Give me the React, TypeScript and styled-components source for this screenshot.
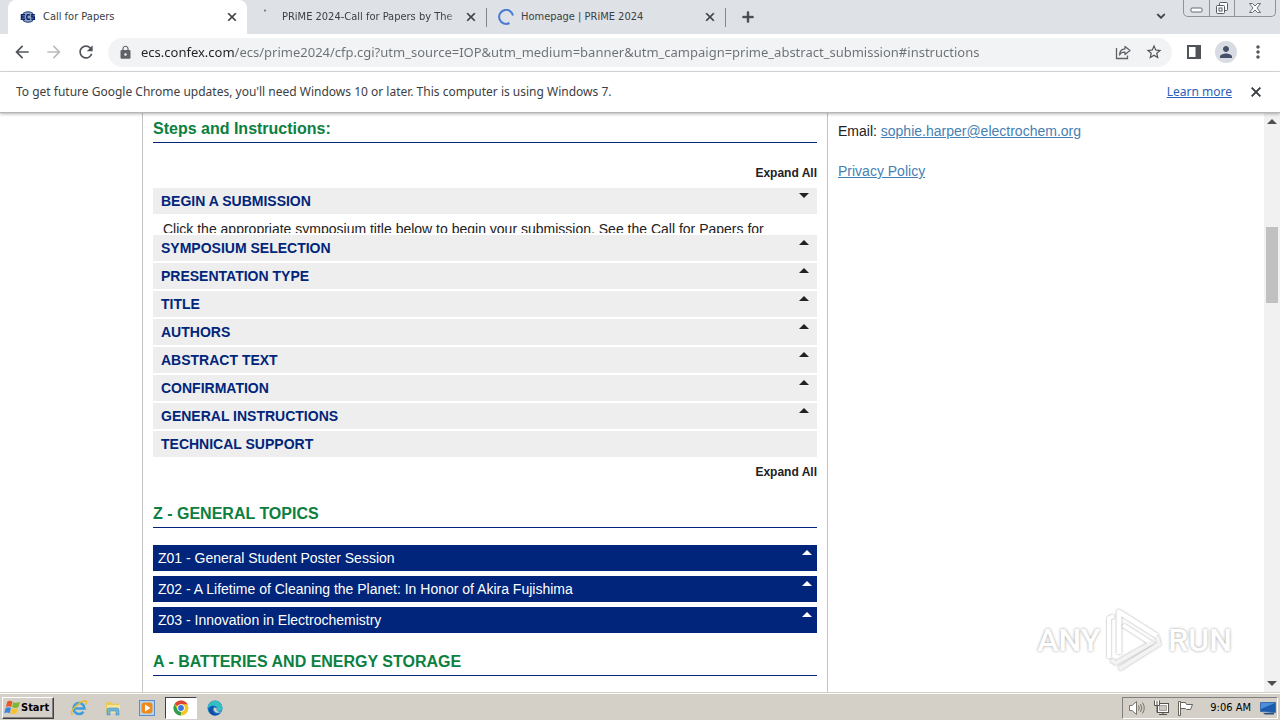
import React, { useState } from "react";
import styled, { createGlobalStyle, css } from "styled-components";
import {
  MdAdd,
  MdArrowBack,
  MdArrowForward,
  MdClose,
  MdExpandMore,
  MdLock,
  MdMoreVert,
  MdPerson,
  MdRefresh,
  MdStarBorder,
} from "react-icons/md";

const UI_FONT = '"DejaVu Sans Condensed", "DejaVu Sans", sans-serif';
const TEXT_FONT = '"Noto Sans", "DejaVu Sans", sans-serif';
const PAGE_FONT = '"Liberation Sans", Arial, sans-serif';

const GlobalStyle = createGlobalStyle`
  *, *::before, *::after { box-sizing: border-box; }
  body {
    margin: 0;
    background: #fff;
    font-family: ${PAGE_FONT};
    overflow: hidden;
  }
  button {
    margin: 0;
    padding: 0;
    border: 0;
    background: none;
    color: inherit;
    font: inherit;
    cursor: pointer;
  }
  h1, h2, h3, p { margin: 0; }
  svg { display: block; flex: none; }
`;

const Screen = styled.div`
  display: flex;
  flex-direction: column;
  height: 100vh;
`;

/* ---------- Browser frame ---------- */

const TabStrip = styled.header`
  display: flex;
  align-items: stretch;
  flex: none;
  height: 34px;
  padding-left: 8px;
  background: #dee1e6;
  font-family: ${UI_FONT};
  font-size: 11px;
  color: #3c4043;
`;

const Tab = styled.div<{ $active?: boolean }>`
  position: relative;
  display: flex;
  align-items: center;
  gap: 7px;
  width: 239px;
  padding: 0 8px 0 12px;
  ${(p) =>
    p.$active
      ? css`
          background: #fff;
          border-radius: 8px 8px 0 0;
        `
      : css`
          &::after {
            content: "";
            position: absolute;
            right: -1px;
            top: 8px;
            width: 1px;
            height: 19px;
            background: #80868b;
          }
        `}
`;

const TabTitle = styled.span<{ $faded?: boolean }>`
  flex: 1;
  min-width: 0;
  overflow: hidden;
  white-space: nowrap;
  line-height: 16px;
  ${(p) =>
    p.$faded &&
    css`
      mask-image: linear-gradient(to right, #000 94%, transparent);
    `}
`;

const IconButton = styled.button<{ $size?: number; $color?: string }>`
  display: flex;
  align-items: center;
  justify-content: center;
  flex: none;
  width: ${(p) => p.$size ?? 16}px;
  height: ${(p) => p.$size ?? 16}px;
  color: ${(p) => p.$color ?? "#3c4043"};
`;

const BoldIconButton = styled(IconButton)`
  path:not([fill="none"]) { stroke: currentColor; stroke-width: 1; }
`;

const NewTab = styled(BoldIconButton)`
  align-self: center;
  margin-left: 9px;
`;

const StripEnd = styled.div`
  display: flex;
  align-items: flex-start;
  gap: 14px;
  margin-left: auto;
  padding-right: 4px;
`;

const TabSearch = styled(BoldIconButton)`
  margin-top: 8px;
`;

const WindowControls = styled.div`
  display: flex;
  height: 17px;
  border: 1px solid #8d929b;
  border-top: 0;
  border-radius: 0 0 5px 5px;
  overflow: hidden;
`;

const WindowButton = styled.button<{ $wide?: boolean }>`
  display: flex;
  align-items: center;
  justify-content: center;
  width: ${(p) => (p.$wide ? 41 : 25)}px;
  & + & { border-left: 1px solid #8d929b; }
`;

const Toolbar = styled.nav`
  display: flex;
  align-items: center;
  flex: none;
  height: 38px;
  padding: 0 12px 1px;
  border-bottom: 1px solid #dadce0;
  background: #fff;
`;

const NavButtons = styled.div`
  display: flex;
  gap: 12px;
  margin-right: 12px;
`;

const AddressBar = styled.form`
  display: flex;
  align-items: center;
  flex: 1;
  height: 29px;
  margin-right: 12px;
  padding: 0 8px 0 10px;
  border-radius: 15px;
  background: #f1f3f4;
  color: #5f6368;
`;

const UrlInput = styled.input`
  flex: 1;
  min-width: 0;
  height: 22px;
  margin-left: 8px;
  padding: 0;
  border: 0;
  outline: 0;
  background: linear-gradient(to right, #202124 94px, #6b7075 94px);
  background-clip: text;
  color: #5f6368;
  -webkit-text-fill-color: transparent;
  font-family: ${TEXT_FONT};
  font-size: 13px;
  line-height: 22px;
`;

const BarActions = styled.div`
  display: flex;
  align-items: center;
  gap: 11px;
`;

const Avatar = styled.button`
  display: flex;
  align-items: center;
  justify-content: center;
  width: 22px;
  height: 22px;
  border-radius: 50%;
  background: #d8dbe2;
  color: #44506a;
`;

const InfoBar = styled.aside`
  position: relative;
  z-index: 1;
  display: flex;
  align-items: center;
  flex: none;
  height: 41px;
  padding: 0 16px;
  border-bottom: 1px solid #b4b6b8;
  background: #fff;
  box-shadow: 0 1px 3px rgba(0, 0, 0, 0.3);
  font-family: ${TEXT_FONT};
  font-size: 12px;
  line-height: 16px;
  color: #3c4043;
`;

const LearnMore = styled.a`
  margin-left: auto;
  margin-right: 16px;
  color: #2a62b8;
`;

/* ---------- Web page ---------- */

const Viewport = styled.div`
  display: flex;
  flex: 1;
  min-height: 0;
`;

const PageArea = styled.div`
  position: relative;
  flex: 1;
  overflow: hidden;
`;

const Page = styled.div`
  display: flex;
  max-width: 980px;
  min-height: 100%;
  margin: 0 auto;
  color: #222;
  font-size: 14px;
`;

const MainColumn = styled.main`
  flex: 1;
  padding: 4px 10px 16px;
  border: solid #c3c3c3;
  border-width: 0 1px;
`;

const Heading = styled.h2`
  padding: 1px 0 2px;
  border-bottom: 1px solid #00257a;
  color: #0b8040;
  font-size: 16px;
  line-height: 22px;
`;

const ExpandRow = styled.div<{ $last?: boolean }>`
  display: flex;
  justify-content: flex-end;
  padding: ${(p) => (p.$last ? "7px 0 22px" : "22px 0 7px")};
`;

const ExpandAll = styled.button`
  font-size: 12px;
  font-weight: bold;
  line-height: 16px;
`;

const Accordion = styled.div`
  display: flex;
  flex-direction: column;
  gap: 2px;
`;

const Step = styled.button`
  display: flex;
  justify-content: space-between;
  width: 100%;
  height: 26px;
  padding: 0 8px;
  background: #eee;
  color: #00257a;
  font-size: 14px;
  font-weight: bold;
  line-height: 26px;
  text-align: left;
  svg { margin-top: 5px; color: #222; }
`;

const StepPanel = styled.div`
  height: 17px;
  padding: 4px 10px 0;
  overflow: hidden;
  font-size: 14px;
  line-height: 18px;
  white-space: nowrap;
`;

const TopicList = styled.div`
  display: flex;
  flex-direction: column;
  gap: 5px;
  padding: 17px 0;
`;

const Topic = styled.button`
  display: flex;
  justify-content: space-between;
  height: 26px;
  padding: 0 5px;
  background: #00257a;
  color: #fff;
  font-size: 14px;
  line-height: 26px;
  text-align: left;
  svg { margin-top: 5px; }
`;

const Sidebar = styled.div`
  width: 294px;
  padding: 8px 10px;
  line-height: 20px;
`;

const SideItem = styled.p`
  margin-bottom: 20px;
`;

const PageLink = styled.a`
  color: #467fb3;
`;

const ScrollTrack = styled.div`
  display: flex;
  flex-direction: column;
  align-items: center;
  width: 16px;
  padding: 6px 0 6px;
  background: #f1f1f1;
  color: #505050;
`;

const ScrollThumb = styled.div`
  width: 12px;
  height: 76px;
  margin: 103px 0 auto;
  background: #c1c1c1;
`;

const Watermark = styled.div`
  position: absolute;
  right: 32px;
  bottom: 20px;
  display: flex;
  align-items: center;
  gap: 5px;
  color: #fff;
  font-family: Roboto, "Liberation Sans", sans-serif;
  font-size: 32px;
  font-weight: 500;
  line-height: 64px;
  text-shadow: 0 0 3px rgba(0, 0, 0, 0.4);
  pointer-events: none;
  svg { filter: drop-shadow(0 0 1px rgba(0, 0, 0, 0.35)); }
`;

/* ---------- Taskbar ---------- */

const Taskbar = styled.footer`
  display: flex;
  align-items: center;
  flex: none;
  height: 28px;
  padding: 2px 2px 0;
  border-top: 1px solid #d4d0c8;
  background: #d4d0c8;
  box-shadow: inset 0 1px 0 #fff;
  font-family: ${UI_FONT};
  font-size: 11px;
  color: #000;
`;

const StartButton = styled.button`
  display: flex;
  align-items: center;
  width: 52px;
  height: 22px;
  margin-right: 9px;
  padding-left: 1px;
  border: 1px solid;
  border-color: #fff #404040 #404040 #fff;
  box-shadow: inset -1px -1px 0 #808080;
  font-size: 11px;
  font-weight: bold;
`;

const TaskButton = styled.button<{ $pressed?: boolean }>`
  display: flex;
  align-items: center;
  justify-content: center;
  width: 32px;
  height: 22px;
  margin-right: 2px;
  ${(p) =>
    p.$pressed &&
    css`
      background: #fff;
      border: 1px solid;
      border-color: #404040 #fff #fff #404040;
    `}
`;

const Tray = styled.div`
  display: flex;
  align-items: center;
  gap: 8px;
  height: 22px;
  margin-left: auto;
  padding: 0 1px 0 5px;
  border: 1px solid;
  border-color: #808080 #fff #fff #808080;
`;

const Clock = styled.time`
  margin: 0 1px 0 8px;
`;

/* ---------- Icons ---------- */

const Triangle = ({ down }: { down?: boolean }) => (
  <svg width="10" height="5" viewBox="0 0 10 5" fill="currentColor" aria-hidden="true">
    <path d={down ? "M0 0h10L5 5z" : "M0 5h10L5 0z"} />
  </svg>
);

const EcsLogo = () => (
  <svg width="16" height="16" viewBox="0 0 16 16" aria-hidden="true">
    <ellipse cx="8" cy="8" rx="7" ry="5.6" fill="#8fa6c8" />
    <path d="M3 4.4Q8 1.200 13 4.400M3 11.600Q8 14.800 13 11.600" stroke="#1c3f80" fill="none" />
    <path d="M5.200 5.700H1.500V10.300H5.200M1.500 8H4.800M10 5.700H8Q6.800 5.700 6.800 8Q6.800 10.300 8 10.300H10M14.800 5.700H11.900V8H14.300V10.300H11.300" stroke="#0b2366" strokeWidth="1.500" fill="none" />
  </svg>
);

const SpinnerDot = () => (
  <svg width="16" height="16" viewBox="0 0 16 16" aria-hidden="true">
    <circle cx="6" cy="1.500" r="1" fill="#5f6b85" />
  </svg>
);

const Spinner = () => (
  <svg width="16" height="16" viewBox="0 0 16 16" fill="none" stroke="#4a7bd4" strokeWidth="2" aria-hidden="true">
    <path d="M11.500 14A7 7 0 1 1 15 6.500" />
  </svg>
);

const ShareIcon = () => (
  <svg width="16" height="16" viewBox="0 0 16 16" fill="none" stroke="currentColor" strokeWidth="1.300" aria-hidden="true">
    <path d="M1.500 4V14.500H12.500V11.500" />
    <path d="M10 2.500L15 6.500L10 10.500V8.200Q6 8 4.500 11Q4.800 5 10 4.800z" strokeLinejoin="round" />
  </svg>
);

const SidePanelIcon = () => (
  <svg width="14" height="14" viewBox="0 0 14 14" aria-hidden="true">
    <path d="M0 0H14V14H0zM2 2V12H8.500V2z" fill="#505459" fillRule="evenodd" />
  </svg>
);

const MinimizeIcon = () => (
  <svg width="13" height="16" viewBox="0 0 13 16" aria-hidden="true">
    <rect x="1" y="8" width="11" height="4" rx="1" fill="#fff" stroke="#666b75" />
  </svg>
);

const RestoreIcon = () => (
  <svg width="14" height="16" viewBox="0 0 14 16" fill="#fff" stroke="#565b65" aria-hidden="true">
    <rect x="4.500" y="2.500" width="8" height="8" rx="1" />
    <rect x="1.500" y="5.500" width="8" height="8" rx="1" />
    <rect x="4" y="8" width="3" height="3" />
  </svg>
);

const CloseWindowIcon = () => (
  <svg width="14" height="16" viewBox="0 0 14 16" aria-hidden="true">
    <path d="M1.500 3.500H4.500L7 6L9.500 3.500H12.500L9 8L12.500 12.500H9.500L7 10L4.500 12.500H1.500L5 8z" fill="#fff" stroke="#666b75" />
  </svg>
);

const WindowsFlag = () => (
  <svg width="17" height="17" viewBox="0 0 16 16" aria-hidden="true">
    <path d="M3 2.500Q5.500 1 8 2.500L6.800 7.500Q4.500 6.300 1.800 7.500z" fill="#e8562a" />
    <path d="M8.700 3Q11.500 4.300 15 2.700L13.500 7.700Q10.500 9 7.600 7.800z" fill="#7db72f" />
    <path d="M1.500 8.400Q4.200 7.200 6.600 8.400L5.300 13.300Q2.800 12 .2 13.200z" fill="#3b86d8" />
    <path d="M7.300 8.800Q10.200 10 13.200 8.600L11.800 13.500Q8.800 14.800 6 13.600z" fill="#f8c22c" />
  </svg>
);

const ExplorerE = () => (
  <svg width="18" height="18" viewBox="0 0 18 18" fill="none" aria-hidden="true">
    <path d="M4.500 9.500H14.500A5.500 5.500 0 1 0 13.500 12.700" stroke="#3c9fdd" strokeWidth="2.600" />
    <path d="M2.500 15.500Q-.5 14 5 8Q12 1 16 1.800Q17.500 2.500 15.500 5.500" stroke="#e9b92e" strokeWidth="1.400" />
  </svg>
);

const FolderIcon = () => (
  <svg width="18" height="18" viewBox="0 0 18 18" aria-hidden="true">
    <path d="M2 3H7L8 4.500H15V14H2z" fill="#e9c95c" />
    <path d="M3 6H16V14H3z" fill="#f6e59b" />
    <path d="M3 16V11Q3 9 5 9H13Q15 9 15 11V16H12V12H6V16z" fill="#6eb5dd" stroke="#4691bd" strokeWidth=".6" />
  </svg>
);

const MediaPlayerIcon = () => (
  <svg width="18" height="18" viewBox="0 0 18 18" aria-hidden="true">
    <rect x="1.500" y="1.500" width="15" height="15" fill="#b9d4ec" stroke="#5a8fc2" />
    <rect x="3.500" y="3.500" width="11" height="11" rx="3" fill="#ef8a1d" />
    <path d="M7 5.500L12.500 9L7 12.500z" fill="#fff" />
  </svg>
);

const ChromeIcon = () => (
  <svg width="16" height="16" viewBox="0 0 16 16" aria-hidden="true">
    <circle cx="8" cy="8" r="7.500" fill="#f9c524" />
    <path d="M8 8L1.500 4.250A7.500 7.500 0 0 1 14.500 4.250H8z" fill="#dd4434" />
    <path d="M1.500 4.250L4.750 9.900L8 11.700L7.800 15.500A7.500 7.500 0 0 1 1.500 4.250z" fill="#2f9e50" />
    <circle cx="8" cy="8" r="3.750" fill="#fff" />
    <circle cx="8" cy="8" r="2.900" fill="#3c78dc" />
  </svg>
);

const EdgeIcon = () => (
  <svg width="16" height="16" viewBox="0 0 16 16" aria-hidden="true">
    <circle cx="8" cy="8" r="7.500" fill="#1677cf" />
    <path d="M.6 7A7.500 7.500 0 0 1 15.500 8Q15.500 11 12 11Q9 11 9.800 9Q10.500 6 7 5.500Q3 5 .6 8z" fill="#35bfc2" />
    <path d="M7 6Q4 9 6.500 12.500Q9 15 13.500 13A7.500 7.500 0 0 1 6 15.200Q1 13 2.500 8.500Q4 5.500 7 6z" fill="#0f4f9e" />
    <path d="M7.300 7.500Q5.500 10 8.500 12.200Q11.500 13.700 14.600 11.500Q11.500 12.200 9.900 10.800Q9 9.800 9.900 8.600z" fill="#d4d0c8" />
  </svg>
);

const SpeakerIcon = () => (
  <svg width="17" height="16" viewBox="0 0 17 16" fill="none" stroke="#76736d" aria-hidden="true">
    <path d="M1.500 5.500H4L8.500 1.500V14.500L4 10.500H1.500z" fill="#fff" />
    <path d="M10.500 5.500Q12 8 10.500 10.500M12.500 4Q15 8 12.500 12M14.500 2.500Q18 8 14.500 13.500" />
  </svg>
);

const NetworkIcon = () => (
  <svg width="16" height="16" viewBox="0 0 16 16" fill="#fff" stroke="#55534f" aria-hidden="true">
    <rect x="4.500" y="3.500" width="11" height="9" />
    <path d="M6.500 5.500H13.500V10.500H6.500z" fill="#c9c6bf" stroke="#a5a29b" />
    <path d="M6 14.500H14M10 12.500V14.500" />
    <path d="M1.500 .500V5.500H6.500V.500M4 1V5M4 5.500V12.500" />
  </svg>
);

const FlagIcon = () => (
  <svg width="17" height="16" viewBox="0 0 17 16" fill="#fff" stroke="#65635e" aria-hidden="true">
    <path d="M1.500 1.500H3.500V15.500H1.500z" />
    <path d="M3.500 2.500H8.500L9.500 4.500H15.500L13.500 9.500H9.500L8.500 8.500H3.500z" />
  </svg>
);

const DesktopIcon = () => (
  <svg width="16" height="16" viewBox="0 0 16 16" aria-hidden="true">
    <path d="M.500 2.500H15.500V12.500L.500 11.500z" fill="#1d5cab" stroke="#3d6fae" />
    <path d="M1 3H15L1 9z" fill="#4a8fd8" />
    <path d="M3 13H14V14.500H5z" fill="#2c4d78" />
  </svg>
);

const PlayLogo = () => (
  <svg width="58" height="64" viewBox="0 0 58 64" fill="none" stroke="#fff" strokeWidth="4" strokeLinejoin="round" aria-hidden="true">
    <path d="M4 50V10L9 8" />
    <path d="M14 46V4L52 28" strokeWidth="5" />
    <path d="M18 17L46 35" />
    <path d="M6 52L11 55L48 34" stroke="#f3f3f3" />
    <path d="M14 61L54 36L52 28" stroke="#f3f3f3" />
  </svg>
);

/* ---------- Data ---------- */

const STEPS = [
  "BEGIN A SUBMISSION",
  "SYMPOSIUM SELECTION",
  "PRESENTATION TYPE",
  "TITLE",
  "AUTHORS",
  "ABSTRACT TEXT",
  "CONFIRMATION",
  "GENERAL INSTRUCTIONS",
  "TECHNICAL SUPPORT",
];

const TOPICS = [
  "Z01 - General Student Poster Session",
  "Z02 - A Lifetime of Cleaning the Planet: In Honor of Akira Fujishima",
  "Z03 - Innovation in Electrochemistry",
];

const URL_TEXT =
  "ecs.confex.com/ecs/prime2024/cfp.cgi?utm_source=IOP&utm_medium=banner&utm_campaign=prime_abstract_submission#instructions";

/* ---------- Sections ---------- */

const BrowserTab = ({
  icon,
  title,
  active,
  faded,
}: {
  icon: React.ReactNode;
  title: string;
  active?: boolean;
  faded?: boolean;
}) => (
  <Tab $active={active}>
    {icon}
    <TabTitle $faded={faded}>{title}</TabTitle>
    <BoldIconButton aria-label={`Close ${title}`} $size={14}>
      <MdClose size={14} />
    </BoldIconButton>
  </Tab>
);

const BrowserChrome = () => {
  const [url, setUrl] = useState(URL_TEXT);
  return (
    <>
      <TabStrip>
        <BrowserTab active icon={<EcsLogo />} title="Call for Papers" />
        <BrowserTab faded icon={<SpinnerDot />} title="PRiME 2024-Call for Papers by The E" />
        <BrowserTab icon={<Spinner />} title="Homepage | PRiME 2024" />
        <NewTab aria-label="New tab" $size={28}>
          <MdAdd size={18} />
        </NewTab>
        <StripEnd>
          <TabSearch aria-label="Search tabs">
            <MdExpandMore size={16} />
          </TabSearch>
          <WindowControls>
            <WindowButton aria-label="Minimize"><MinimizeIcon /></WindowButton>
            <WindowButton aria-label="Restore"><RestoreIcon /></WindowButton>
            <WindowButton aria-label="Close window" $wide><CloseWindowIcon /></WindowButton>
          </WindowControls>
        </StripEnd>
      </TabStrip>
      <Toolbar>
        <NavButtons>
          <IconButton aria-label="Back" $size={20} $color="#50545a"><MdArrowBack size={20} /></IconButton>
          <IconButton aria-label="Forward" $size={20} $color="#babcbe"><MdArrowForward size={20} /></IconButton>
          <IconButton aria-label="Reload" $size={20} $color="#50545a"><MdRefresh size={20} /></IconButton>
        </NavButtons>
        <AddressBar onSubmit={(e) => e.preventDefault()}>
          <MdLock size={15} />
          <UrlInput aria-label="Address" value={url} onChange={(e) => setUrl(e.target.value)} />
          <BarActions>
            <IconButton type="button" aria-label="Share" $size={20} $color="#5f6368"><ShareIcon /></IconButton>
            <IconButton type="button" aria-label="Bookmark" $size={20} $color="#50545a"><MdStarBorder size={18} /></IconButton>
          </BarActions>
        </AddressBar>
        <BarActions>
          <IconButton aria-label="Side panel" $size={20}><SidePanelIcon /></IconButton>
          <Avatar aria-label="Profile"><MdPerson size={18} /></Avatar>
          <IconButton aria-label="Menu" $size={20} $color="#50545a"><MdMoreVert size={20} /></IconButton>
        </BarActions>
      </Toolbar>
      <InfoBar>
        <span>To get future Google Chrome updates, you'll need Windows 10 or later. This computer is using Windows 7.</span>
        <LearnMore href="#learn">Learn more</LearnMore>
        <BoldIconButton aria-label="Dismiss"><MdClose size={16} /></BoldIconButton>
      </InfoBar>
    </>
  );
};

const Steps = () => (
  <Accordion>
    {STEPS.map((step, i) => (
      <React.Fragment key={step}>
        <Step aria-expanded={i === 0}>
          {step}
          {i < STEPS.length - 1 && <Triangle down={i === 0} />}
        </Step>
        {i === 0 && (
          <StepPanel>
            Click the appropriate symposium title below to begin your submission. See the Call for Papers for
          </StepPanel>
        )}
      </React.Fragment>
    ))}
  </Accordion>
);

export default function App() {
  return (
    <Screen>
      <GlobalStyle />
      <BrowserChrome />
      <Viewport>
        <PageArea>
          <Page>
            <MainColumn>
              <Heading>Steps and Instructions:</Heading>
              <ExpandRow><ExpandAll>Expand All</ExpandAll></ExpandRow>
              <Steps />
              <ExpandRow $last><ExpandAll>Expand All</ExpandAll></ExpandRow>
              <Heading>Z - GENERAL TOPICS</Heading>
              <TopicList>
                {TOPICS.map((topic) => (
                  <Topic key={topic}>
                    {topic}
                    <Triangle />
                  </Topic>
                ))}
              </TopicList>
              <Heading>A - BATTERIES AND ENERGY STORAGE</Heading>
            </MainColumn>
            <Sidebar>
              <SideItem>
                Email: <PageLink href="mailto:sophie.harper@electrochem.org">sophie.harper@electrochem.org</PageLink>
              </SideItem>
              <SideItem><PageLink href="#privacy">Privacy Policy</PageLink></SideItem>
            </Sidebar>
          </Page>
          <Watermark>
            <span>ANY</span>
            <PlayLogo />
            <span>RUN</span>
          </Watermark>
        </PageArea>
        <ScrollTrack>
          <Triangle />
          <ScrollThumb />
          <Triangle down />
        </ScrollTrack>
      </Viewport>
      <Taskbar>
        <StartButton><WindowsFlag />Start</StartButton>
        <TaskButton aria-label="Internet Explorer"><ExplorerE /></TaskButton>
        <TaskButton aria-label="File Explorer"><FolderIcon /></TaskButton>
        <TaskButton aria-label="Media Player"><MediaPlayerIcon /></TaskButton>
        <TaskButton aria-label="Chrome" $pressed><ChromeIcon /></TaskButton>
        <TaskButton aria-label="Edge"><EdgeIcon /></TaskButton>
        <Tray>
          <SpeakerIcon />
          <NetworkIcon />
          <FlagIcon />
          <Clock>9:06 AM</Clock>
          <DesktopIcon />
        </Tray>
      </Taskbar>
    </Screen>
  );
}
